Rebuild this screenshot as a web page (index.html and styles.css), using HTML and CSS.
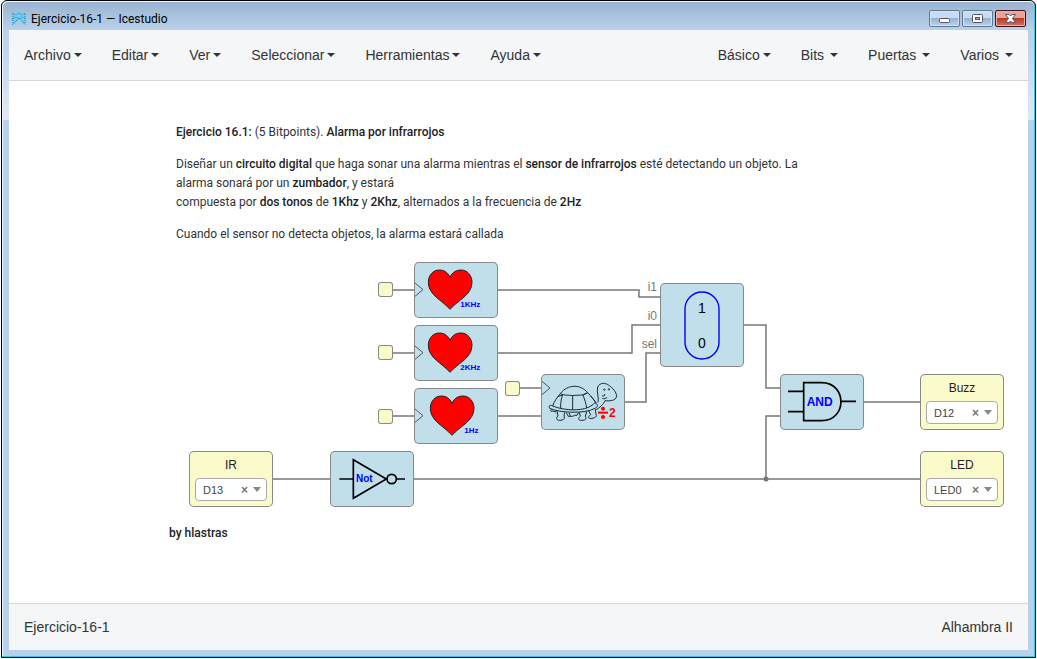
FILE: index.html
```html
<!DOCTYPE html>
<html lang="es">
<head>
<meta charset="utf-8">
<title>Ejercicio-16-1 — Icestudio</title>
<link rel="stylesheet" href="styles.css">
</head>
<body>
<div class="window">
  <header class="titlebar">
    <svg class="app-icon" viewBox="0 0 16 14" aria-hidden="true">
      <path d="M2 2L5 1L8 0L11 1L14 2L15 7L14 12L12 13L10 9L8 7L6 9L4 13L2 12L1 7Z" fill="#6fd0f2"/>
      <path d="M1 1L5 3L8 1L11 3L15 1M1 7L5 5L8 7L11 5L15 7M1 13L4 10L8 6L12 10L15 13M2 2V12M14 2V12" fill="none" stroke="#2a7fa8" stroke-width="1" stroke-dasharray="1 1"/>
    </svg>
    <h1 class="title">Ejercicio-16-1 — Icestudio</h1>
    <div class="controls">
      <button class="control" aria-label="Minimizar"><svg viewBox="0 0 31 17"><rect x="10.500" y="8.500" width="10" height="4" rx="1" fill="#fff" stroke="#535666"/></svg></button>
      <button class="control" aria-label="Maximizar"><svg viewBox="0 0 31 17"><rect x="10.500" y="4.500" width="10" height="8" rx="1" fill="#fff" stroke="#535666"/><rect x="13.500" y="7.500" width="4" height="2" fill="#8fb0d4" stroke="#535666"/></svg></button>
      <button class="control close" aria-label="Cerrar"><svg viewBox="0 0 31 17"><path d="M10.500 4.500h3.500l1.500 1.500 1.500-1.500h3.500l-3 4 3 4h-3.500l-1.500-1.500-1.500 1.500h-3.500l3-4z" fill="#fff" stroke="#535666"/></svg></button>
    </div>
  </header>

  <div class="app">
    <nav class="menubar">
      <div class="menus">
        <button class="menu">Archivo<span class="caret"></span></button>
        <button class="menu">Editar<span class="caret"></span></button>
        <button class="menu">Ver<span class="caret"></span></button>
        <button class="menu">Seleccionar<span class="caret"></span></button>
        <button class="menu">Herramientas<span class="caret"></span></button>
        <button class="menu">Ayuda<span class="caret"></span></button>
      </div>
      <div class="menus">
        <button class="menu">Básico<span class="caret"></span></button>
        <button class="menu spaced">Bits<span class="caret"></span></button>
        <button class="menu spaced">Puertas<span class="caret"></span></button>
        <button class="menu spaced">Varios<span class="caret"></span></button>
      </div>
    </nav>

    <main class="canvas">
      <section class="note statement">
        <p><strong>Ejercicio 16.1:</strong> (5 Bitpoints). <strong>Alarma por infrarrojos</strong></p>
        <p>Diseñar un <strong>circuito digital</strong> que haga sonar una alarma mientras el <strong>sensor de infrarrojos</strong> esté detectando un objeto. La<br>alarma sonará por un <strong>zumbador</strong>, y estará<br>compuesta por <strong>dos tonos</strong> de <strong>1Khz</strong> y <strong>2Khz</strong>, alternados a la frecuencia de <strong>2Hz</strong></p>
        <p>Cuando el sensor no detecta objetos, la alarma estará callada</p>
      </section>
      <p class="note author"><strong>by hlastras</strong></p>

      <svg class="wires" width="1019" height="522" viewBox="9 81 1019 522" aria-hidden="true">
        <g class="wire">
          <path d="M393 290H414M393 353H414M393 416H414M520 388H541"/>
          <path d="M498 290H639V297H660"/>
          <path d="M498 353H632V325H660"/>
          <path d="M498 416H541M625 402H646V353H660"/>
          <path d="M744 325H766V388H780M864 402H920"/>
          <path d="M273 479H330M414 479H920M766 479V416H780"/>
        </g>
        <circle cx="766" cy="479" r="2.500" fill="#777"/>
        <g class="port-label">
          <text x="657" y="291">i1</text>
          <text x="657" y="320">i0</text>
          <text x="657" y="348">sel</text>
        </g>
      </svg>

      <div class="pad pad-1khz"></div>
      <div class="pad pad-2khz"></div>
      <div class="pad pad-1hz"></div>
      <div class="pad pad-divider"></div>

      <div class="block heart-1khz">
        <svg viewBox="0 0 252 168">
          <path class="clock" d="M3 63L27 83L3 103"/>
          <path class="heart" d="M108 46C101 29 88 24 76 24C56 24 43 41 43 61C43 99 84 114 108 142C132 114 174 99 174 61C174 41 161 24 141 24C129 24 115 29 108 46Z"/>
          <text class="tag tag-small" x="139" y="134">1KHz</text>
        </svg>
      </div>
      <div class="block heart-2khz">
        <svg viewBox="0 0 252 168">
          <path class="clock" d="M3 63L27 83L3 103"/>
          <path class="heart" d="M108 46C101 29 88 24 76 24C56 24 43 41 43 61C43 99 84 114 108 142C132 114 174 99 174 61C174 41 161 24 141 24C129 24 115 29 108 46Z"/>
          <text class="tag tag-small" x="139" y="134">2KHz</text>
        </svg>
      </div>
      <div class="block heart-1hz">
        <svg viewBox="0 0 252 168">
          <path class="clock" d="M3 63L27 83L3 103"/>
          <path class="heart" d="M114 46C107 29 94 24 82 24C62 24 49 41 49 61C49 99 90 114 114 142C138 114 180 99 180 61C180 41 167 24 147 24C135 24 121 29 114 46Z"/>
          <text class="tag tag-small" x="151" y="134">1Hz</text>
        </svg>
      </div>

      <div class="block divider">
        <svg viewBox="153 42 252 168">
          <path class="clock" d="M156 64L180 84L156 104"/>
          <g class="turtle">
            <path d="M188 138C192 124 203 110 211 101C233 72 272 72 293 98C302 107 313 122 319 130"/>
            <path d="M188 138C178 133 176 138 179 145C205 158 285 163 315 145C325 140 324 133 315 128C309 135 298 142 284 146C254 153 215 149 188 138"/>
            <path d="M211 101C225 108 236 104 247 107C262 104 277 109 293 98M218 104C214 116 211 130 212 145M248 107V150M278 105C284 116 288 130 290 144"/>
            <path d="M293 98L278 105M203 110L217 105M302 108L318 127"/>
            <path d="M324 127C328 117 319 96 323 81C330 67 346 67 358 77C368 84 379 95 380 109C377 124 355 123 345 122C341 132 330 143 315 151"/>
            <path d="M336 107C342 111 345 106 344 102M337 115C342 118 348 115 351 112"/>
            <path d="M201 153L204 168C197 174 199 181 209 181C220 181 226 176 222 168L224 157M268 157L271 169C263 175 264 182 276 181C287 181 291 176 286 169L290 155M296 153L302 164C292 170 295 178 306 175C315 174 322 169 318 163L316 149"/>
            <path d="M229 158L235 169H248L254 166H261L266 158M237 159L241 168M185 148C180 151 181 156 187 153L199 156"/>
            <circle cx="343" cy="89" r="2"/><circle cx="357" cy="88" r="2"/>
          </g>
          <path d="M324 158H354" stroke="#f00" stroke-width="6"/>
          <circle cx="339" cy="146" r="6" fill="#f00"/><circle cx="339" cy="171" r="6" fill="#f00"/>
          <text class="divisor" x="357" y="170">2</text>
        </svg>
      </div>

      <div class="block mux">
        <svg viewBox="0 0 84 84">
          <rect x="25" y="9" width="34" height="67" rx="17" fill="none" stroke="#00f" stroke-width="1.400"/>
          <text class="digit" x="42" y="30">1</text>
          <text class="digit" x="42" y="65">0</text>
        </svg>
      </div>

      <div class="block and-gate">
        <svg viewBox="90 27 252 168">
          <path class="gate" d="M161 53H215C292 53 292 167 215 167H161ZM114 79H161M114 140H161M273 109H318"/>
          <text class="tag tag-large" x="209" y="123">AND</text>
        </svg>
      </div>

      <div class="block not-gate">
        <svg viewBox="510 33 252 168">
          <path class="gate" d="M580 59V175L679 117ZM538 117H580M710 117H735"/>
          <circle class="gate" cx="695" cy="117" r="14"/>
          <text class="tag tag-medium" x="588" y="126">Not</text>
        </svg>
      </div>

      <div class="block io ir">
        <label for="pin-ir">IR</label>
        <div class="picker">
          <select id="pin-ir"><option>D13</option></select>
          <button class="clear" aria-label="Quitar D13">×</button><span class="arrow"></span>
        </div>
      </div>
      <div class="block io buzz">
        <label for="pin-buzz">Buzz</label>
        <div class="picker">
          <select id="pin-buzz"><option>D12</option></select>
          <button class="clear" aria-label="Quitar D12">×</button><span class="arrow"></span>
        </div>
      </div>
      <div class="block io led">
        <label for="pin-led">LED</label>
        <div class="picker">
          <select id="pin-led"><option>LED0</option></select>
          <button class="clear" aria-label="Quitar LED0">×</button><span class="arrow"></span>
        </div>
      </div>
    </main>

    <footer class="statusbar">
      <span>Ejercicio-16-1</span>
      <span>Alhambra II</span>
    </footer>
  </div>
</div>
</body>
</html>
```
FILE: styles.css
```css
* { box-sizing: border-box; }

body {
  margin: 0;
  padding: 0 1px 1px;
  min-height: 100vh;
  display: flex;
  background: #fff;
  font-family: "Liberation Sans", Arial, sans-serif;
  font-size: 14px;
  color: #333;
}

button { font: inherit; color: inherit; border: 0; background: none; padding: 0; }

/* Window frame */
.window {
  flex: 1;
  display: flex;
  flex-direction: column;
  border: 1px solid #000;
  border-radius: 6px 6px 0 0;
  padding: 1px 7px 7px;
  background: linear-gradient(#b9d1ea 30px, #dfe9f5 119px, #b9d1ea 119px);
  box-shadow: inset -1px -1px #27cfee, inset 1px 1px #eef5fc;
}

.titlebar {
  display: flex;
  align-items: center;
  height: 28px;
  margin: 0 -6px;
  padding: 5px 8px 0;
  background: linear-gradient(#99b4d1, #b9d1ea);
  border-radius: 5px 5px 0 0;
}
.app-icon { width: 16px; height: 14px; }
.title {
  flex: 1;
  margin: 0 0 0 4px;
  font: 400 12px/16px Roboto, "Open Sans", sans-serif;
  color: #000;
}
.controls { display: flex; gap: 2px; }
.control {
  width: 31px;
  height: 17px;
  border: 1px solid #5f7795;
  border-radius: 2px;
  background: linear-gradient(#c8dbef 45%, #94b1d1 50%, #bdd5ec);
  box-shadow: inset 0 0 0 1px #d5e4f3;
}
.control svg { display: block; width: 31px; height: 17px; margin: -1px; }
.close {
  border-color: #43121b;
  background: linear-gradient(#e6a49a 45%, #b93a26 50%, #d5705f);
  box-shadow: inset 0 0 0 1px #eab0a5;
}

/* Application */
.app { flex: 1; display: flex; flex-direction: column; background: #fff; }

.menubar {
  display: flex;
  justify-content: space-between;
  height: 51px;
  border-bottom: 1px solid #d3d9df;
  background: #f5f6f8;
}
.menus { display: flex; }
.menu { display: flex; align-items: center; gap: 3px; padding: 0 15px; }
.spaced { gap: 6px; }
.caret {
  border: 4px solid transparent;
  border-top-color: #333;
  border-bottom: 0;
}

.statusbar {
  display: flex;
  justify-content: space-between;
  align-items: center;
  height: 47px;
  padding: 0 15px;
  border-top: 1px solid #d3d9df;
  background: #f5f6f8;
}

/* Circuit canvas */
.canvas { position: relative; flex: 1; min-height: 480px; overflow: hidden; }
.wires { position: absolute; left: 0; top: 0; }
.wire { fill: none; stroke: #777; stroke-width: 1.500; }
.port-label { fill: #777; font-size: 12px; text-anchor: end; }

.note {
  position: absolute;
  margin: 0;
  font: 12px/19px Roboto, "Open Sans", sans-serif;
  white-space: nowrap;
  color: #333;
}
.note p { margin: 0 0 13px; }
.note strong { font-weight: 500; color: #222; }
.statement { left: 167px; top: 42px; }
.author { left: 160px; top: 443px; }

.block, .pad {
  position: absolute;
  box-shadow: inset 0 0 0 1px #888;
}
.block { width: 84px; height: 56px; border-radius: 5px; background: #c0dfeb; }
.block > svg { display: block; width: 100%; height: 100%; }
.pad { width: 15px; height: 15px; border-radius: 3px; background: #fbfaca; }

.pad-1khz { left: 369px; top: 201px; }
.pad-2khz { left: 369px; top: 264px; }
.pad-1hz { left: 369px; top: 328px; }
.pad-divider { left: 496px; top: 300px; }
.heart-1khz { left: 405px; top: 181px; }
.heart-2khz { left: 405px; top: 244px; }
.heart-1hz { left: 405px; top: 307px; }
.divider { left: 532px; top: 293px; }
.mux { left: 651px; top: 202px; height: 84px; }
.and-gate { left: 771px; top: 293px; }
.not-gate { left: 321px; top: 370px; }
.ir { left: 180px; top: 370px; }
.buzz { left: 911px; top: 293px; }
.led { left: 911px; top: 370px; }

.clock { fill: none; stroke: #555; stroke-width: 3; }
.heart { fill: #f00; stroke: #222; stroke-width: 3; }
.gate { fill: none; stroke: #000; stroke-width: 5; }
.turtle { fill: none; stroke: #1b2b30; stroke-width: 3; }
.tag { font-weight: 700; fill: #00f; }
.tag-small { font-size: 24px; }
.tag-medium { font-size: 30px; }
.tag-large { font-size: 36px; text-anchor: middle; }
.divisor { font-size: 36px; font-weight: 700; fill: #f00; }
.digit { font-size: 14px; fill: #000; text-anchor: middle; }

.io {
  display: flex;
  flex-direction: column;
  gap: 6px;
  padding: 7px 6px 6px;
  background: #fbfaca;
  font-size: 12px;
  line-height: 14px;
  text-align: center;
  color: #222;
}
.picker {
  display: flex;
  align-items: center;
  height: 23px;
  padding: 0 5px 0 7px;
  border: 1px solid #aaa;
  border-radius: 4px;
  background: #fff;
}
.picker select {
  flex: 1;
  min-width: 0;
  padding: 0;
  border: 0;
  appearance: none;
  background: none;
  font: 11px/20px "Liberation Sans", Arial, sans-serif;
  color: #444;
}
.clear { margin-right: 5px; font-size: 12px; font-weight: 700; color: #777; }
.arrow {
  border: 4px solid transparent;
  border-top: 5px solid #888;
  border-bottom: 0;
}
```
